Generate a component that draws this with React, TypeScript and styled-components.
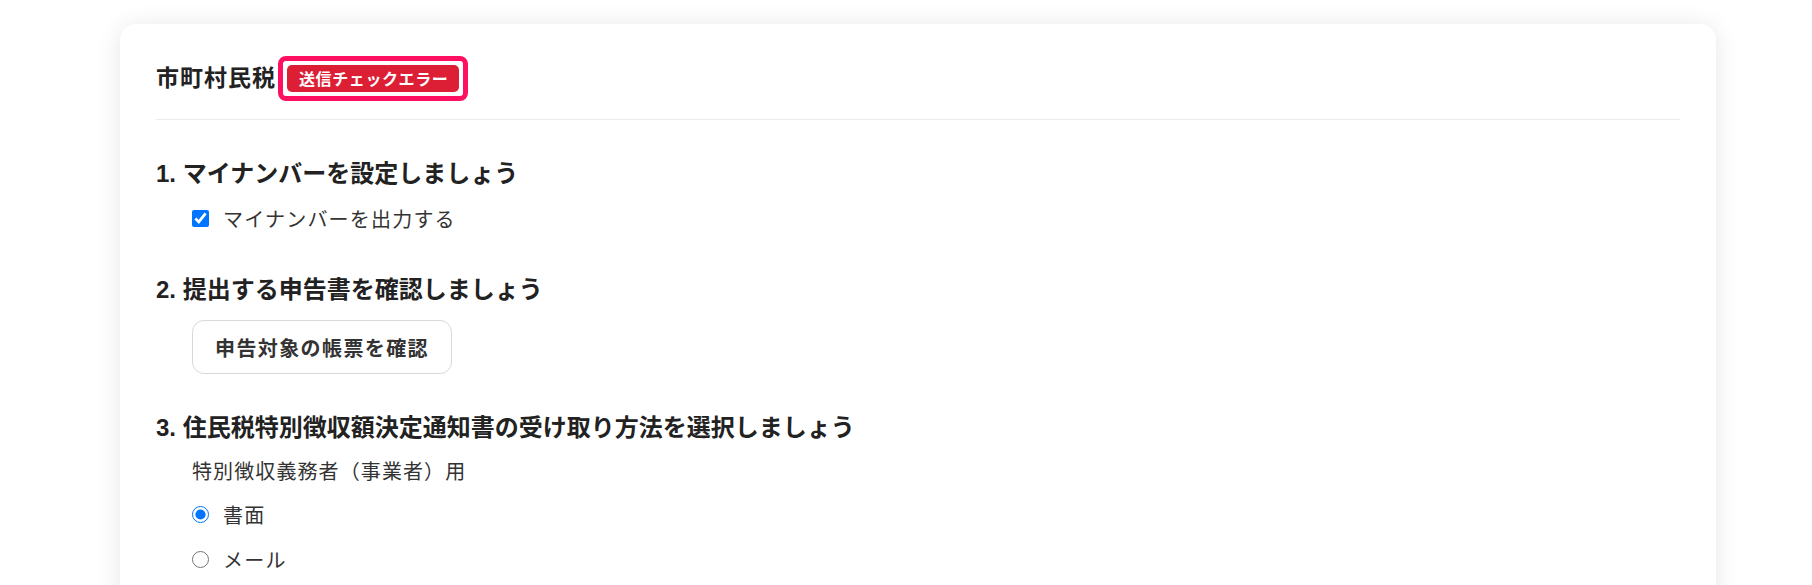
import styled, { createGlobalStyle } from "styled-components";

const GlobalStyle = createGlobalStyle`
  html, body {
    margin: 0;
    padding: 0;
    background: #ffffff;
  }
  body {
    font-family: "Liberation Sans", "Noto Sans CJK JP", sans-serif;
    color: #333333;
  }
`;

const Page = styled.div`
  padding: 24px 96px 0 120px;
  height: 585px;
  box-sizing: border-box;
  overflow: hidden;
`;

const Card = styled.div`
  background: #ffffff;
  border-radius: 16px;
  box-shadow: 0 2px 24px rgba(0, 0, 0, 0.1);
  padding: 0 36px 40px;
  min-height: 700px;
`;

const CardHeader = styled.div`
  display: flex;
  align-items: center;
  padding: 37px 0 24px;
  border-bottom: 1px solid #ebebeb;
`;

const Title = styled.h2`
  margin: 0;
  font-size: 23px;
  line-height: 34px;
  font-weight: 700;
  letter-spacing: 1px;
  color: #222222;
`;

// annotation frame drawn around the status badge
const HighlightFrame = styled.span`
  display: inline-flex;
  margin: -9px 0 -9px 2px;
  padding: 4px;
  border: 5px solid #ff1060;
  border-radius: 8px;
`;

const StatusBadge = styled.span`
  display: inline-flex;
  align-items: center;
  height: 27px;
  padding: 0 11px 0 12px;
  border-radius: 5px;
  background: #dc1f34;
  color: #ffffff;
  font-size: 16px;
  font-weight: 700;
  letter-spacing: 0.6px;
`;

const Section = styled.section<{ $gap: number }>`
  margin-top: ${(p) => p.$gap}px;
`;

const StepHeading = styled.h3`
  margin: 0;
  font-size: 24px;
  line-height: 34px;
  font-weight: 700;
  letter-spacing: 0;
  color: #222222;
`;

const StepBody = styled.div`
  margin-top: 12px;
  padding-left: 36px;
  display: flex;
  flex-direction: column;
  align-items: flex-start;
`;

const OptionRow = styled.label<{ $gap?: number }>`
  display: flex;
  align-items: center;
  gap: 14px;
  height: 30px;
  margin-top: ${(p) => p.$gap ?? 0}px;
  font-size: 20px;
  letter-spacing: 1.2px;
  color: #333333;
  cursor: pointer;
`;

const Check = styled.input`
  width: 17px;
  height: 17px;
  margin: 0;
  accent-color: #0075ff;
`;

const FieldLabel = styled.div`
  height: 30px;
  line-height: 30px;
  font-size: 20px;
  letter-spacing: 1.1px;
  color: #333333;
`;

const OutlineButton = styled.button`
  height: 54px;
  margin-top: 1px;
  padding: 0 22px;
  border: 1px solid #d9d9d9;
  border-radius: 12px;
  background: #ffffff;
  font-family: inherit;
  font-size: 20px;
  font-weight: 700;
  letter-spacing: 1.4px;
  color: #333333;
  cursor: pointer;
`;

export default function App() {
  return (
    <>
      <GlobalStyle />
      <Page>
        <Card>
          <CardHeader>
            <Title>市町村民税</Title>
            <HighlightFrame>
              <StatusBadge>送信チェックエラー</StatusBadge>
            </HighlightFrame>
          </CardHeader>

          <Section $gap={37}>
            <StepHeading>1. マイナンバーを設定しましょう</StepHeading>
            <StepBody>
              <OptionRow>
                <Check type="checkbox" defaultChecked />
                マイナンバーを出力する
              </OptionRow>
            </StepBody>
          </Section>

          <Section $gap={40}>
            <StepHeading>2. 提出する申告書を確認しましょう</StepHeading>
            <StepBody>
              <OutlineButton type="button">申告対象の帳票を確認</OutlineButton>
            </StepBody>
          </Section>

          <Section $gap={37}>
            <StepHeading>3. 住民税特別徴収額決定通知書の受け取り方法を選択しましょう</StepHeading>
            <StepBody>
              <FieldLabel>特別徴収義務者（事業者）用</FieldLabel>
              <OptionRow $gap={12}>
                <Check type="radio" name="notice" defaultChecked />
                書面
              </OptionRow>
              <OptionRow $gap={15}>
                <Check type="radio" name="notice" />
                メール
              </OptionRow>
            </StepBody>
          </Section>
        </Card>
      </Page>
    </>
  );
}
